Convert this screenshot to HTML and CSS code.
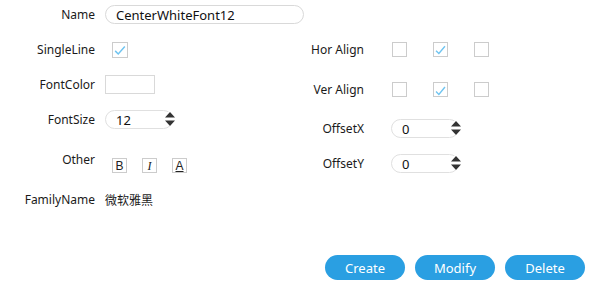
FILE: index.html
```html
<!DOCTYPE html>
<html lang="zh">
<head>
  <meta charset="UTF-8" />
  <title>Font Editor</title>
  <link rel="stylesheet" href="styles.css">
</head>
<body>
  <div class="editor">
    <div class="panel">
      <div class="col-left">
        <div class="row">
          <span class="label">Name</span>
          <input class="text-input name-input" type="text" value="CenterWhiteFont12">
        </div>
        <div class="row">
          <span class="label">SingleLine</span>
          <span class="check checked"><svg viewBox="0 0 16 16"><path d="M2.5 9 L6 12.5 L13.5 4"/></svg></span>
        </div>
        <div class="row">
          <span class="label">FontColor</span>
          <span class="color-box"></span>
        </div>
        <div class="row">
          <span class="label">FontSize</span>
          <div class="spin spin-size">
            <span class="spin-value">12</span>
            <svg class="spin-arrows" viewBox="0 0 10 14"><path d="M5 0 L10 5.5 H0 Z M5 14 L10 8.5 H0 Z"/></svg>
          </div>
        </div>
        <div class="row row-other">
          <span class="label">Other</span>
          <div class="style-btns">
            <span class="style-btn bold">B</span>
            <span class="style-btn italic">I</span>
            <span class="style-btn under">A</span>
          </div>
        </div>
        <div class="row">
          <span class="label">FamilyName</span>
          <span class="family">微软雅黑</span>
        </div>
      </div>

      <div class="col-right">
        <div class="row row-align">
          <span class="label">Hor Align</span>
          <div class="checks">
            <span class="check small"></span>
            <span class="check small checked"><svg viewBox="0 0 16 16"><path d="M2.5 9.5 L6 13 L13.5 4"/></svg></span>
            <span class="check small"></span>
          </div>
        </div>
        <div class="row row-align">
          <span class="label">Ver Align</span>
          <div class="checks">
            <span class="check small"></span>
            <span class="check small checked"><svg viewBox="0 0 16 16"><path d="M2.5 10.5 L6 14 L13.5 5"/></svg></span>
            <span class="check small"></span>
          </div>
        </div>
        <div class="row row-offset">
          <span class="label">OffsetX</span>
          <div class="spin spin-offset">
            <span class="spin-value">0</span>
            <svg class="spin-arrows" viewBox="0 0 10 14"><path d="M5 0 L10 5.5 H0 Z M5 14 L10 8.5 H0 Z"/></svg>
          </div>
        </div>
        <div class="row">
          <span class="label">OffsetY</span>
          <div class="spin spin-offset">
            <span class="spin-value">0</span>
            <svg class="spin-arrows" viewBox="0 0 10 14"><path d="M5 0 L10 5.5 H0 Z M5 14 L10 8.5 H0 Z"/></svg>
          </div>
        </div>
      </div>
    </div>

    <div class="actions">
      <button type="button">Create</button>
      <button type="button">Modify</button>
      <button type="button">Delete</button>
    </div>
  </div>
</body>
</html>
```
FILE: styles.css
```css
* {
  box-sizing: border-box;
  margin: 0;
  padding: 0;
}

body {
  width: 596px;
  height: 283px;
  background-color: #ffffff;
  color: #1a1a1a;
  font-family: 'Noto Sans', 'Noto Sans CJK SC', sans-serif;
  font-size: 12px;
  overflow: hidden;
}

.editor {
  position: relative;
  height: 283px;
}

.panel {
  display: flex;
}

.row {
  display: flex;
  align-items: center;
  height: 35px;
}

.label {
  flex-shrink: 0;
}

/* left column */
.col-left {
  width: 300px;
  flex-shrink: 0;
  margin-top: -3px;
}

.col-left .label {
  width: 95px;
  margin-right: 10px;
  text-align: right;
}

.row-other {
  height: 45px;
}

.text-input {
  flex-shrink: 0;
  height: 19px;
  border: 1px solid #d9d9d9;
  border-radius: 10px;
  padding: 0 10px;
  font-family: inherit;
  font-size: 13px;
  color: #111;
  outline: none;
}

.name-input {
  width: 199px;
}

.check {
  display: inline-flex;
  width: 16px;
  height: 16px;
  margin-left: 7px;
  border: 1px solid #cccccc;
  background: #fff;
}

.check svg {
  width: 100%;
  height: 100%;
  fill: none;
  stroke: #6fc4f0;
  stroke-width: 1.7;
}

.color-box {
  width: 50px;
  height: 19px;
  border: 1px solid #d9d9d9;
}

.spin {
  position: relative;
  height: 19px;
  border: 1px solid #e0e0e0;
  border-radius: 10px;
  display: flex;
  align-items: center;
  padding-left: 10px;
  font-size: 13px;
  color: #111;
}

.spin-size {
  width: 68px;
}

.spin-arrows {
  position: absolute;
  right: -3px;
  top: 1px;
  width: 10px;
  height: 14px;
  fill: #333;
  background: #fff;
}

.style-btns {
  display: flex;
  gap: 15px;
  margin-left: 7px;
  margin-top: 12px;
}

.style-btn {
  display: flex;
  align-items: center;
  justify-content: center;
  width: 15px;
  height: 15px;
  border: 1px solid #cccccc;
  font-family: 'Liberation Sans', sans-serif;
  font-size: 12px;
  line-height: 1;
  color: #222;
}

.style-btn.italic {
  font-family: 'Liberation Serif', serif;
  font-style: italic;
}

.style-btn.under {
  text-decoration: underline;
}

.family {
  font-size: 12px;
}

/* right column */
.col-right {
  padding-top: 32px;
}

.col-right .label {
  width: 64px;
  margin-right: 27px;
  text-align: right;
}

.row-align {
  margin-bottom: 5px;
}

.row-offset {
  margin-top: -1px;
}

.checks {
  display: flex;
  gap: 25px;
}

.check.small {
  width: 15px;
  height: 15px;
  margin-left: 1px;
}

.spin-offset {
  width: 68px;
}

/* buttons */
.actions {
  position: absolute;
  right: 11px;
  top: 255px;
  display: flex;
  gap: 10px;
}

.actions button {
  width: 80px;
  height: 25px;
  border: none;
  border-radius: 13px;
  background-color: #2a9fe2;
  color: #ffffff;
  font-family: inherit;
  font-size: 13px;
  cursor: pointer;
}
```
